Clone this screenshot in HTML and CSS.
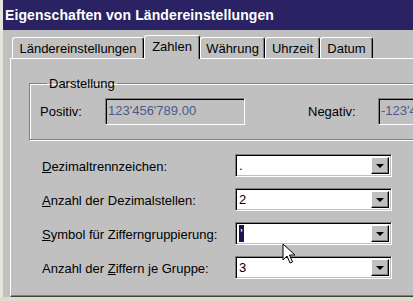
FILE: index.html
```html
<!DOCTYPE html>
<html lang="de">
<head>
    <meta charset="UTF-8">
    <title>Eigenschaften von Ländereinstellungen</title>
    <link rel="stylesheet" href="styles.css">
</head>
<body>
    <div class="window">
        <div class="titlebar">Eigenschaften von Ländereinstellungen</div>

        <div class="tabs">
            <div class="tab tab-land">Ländereinstellungen</div>
            <div class="tab tab-zahlen active">Zahlen</div>
            <div class="tab tab-waehrung">Währung</div>
            <div class="tab tab-uhrzeit">Uhrzeit</div>
            <div class="tab tab-datum">Datum</div>
        </div>

        <div class="panel">
            <fieldset class="group">
                <legend>Darstellung</legend>
                <div class="sample-row">
                    <span class="sample-label">Positiv:</span>
                    <div class="sample-box">123'456'789.00</div>
                    <span class="sample-label neg">Negativ:</span>
                    <div class="sample-box wide">-123'456'789.00</div>
                </div>
            </fieldset>

            <div class="settings">
                <div class="row">
                    <label><u>D</u>ezimaltrennzeichen:</label>
                    <div class="combo">
                        <span class="value">.</span>
                        <span class="drop"><span class="arrow"></span></span>
                    </div>
                </div>
                <div class="row">
                    <label><u>A</u>nzahl der Dezimalstellen:</label>
                    <div class="combo">
                        <span class="value">2</span>
                        <span class="drop"><span class="arrow"></span></span>
                    </div>
                </div>
                <div class="row">
                    <label><u>S</u>ymbol für Zifferngruppierung:</label>
                    <div class="combo">
                        <span class="value"><span class="selected">'</span></span>
                        <span class="drop"><span class="arrow"></span></span>
                    </div>
                </div>
                <div class="row">
                    <label>Anzahl der <u>Z</u>iffern je Gruppe:</label>
                    <div class="combo">
                        <span class="value">3</span>
                        <span class="drop"><span class="arrow"></span></span>
                    </div>
                </div>
            </div>
        </div>
    </div>

    <!-- mouse pointer over the third combo -->
    <svg class="cursor" width="14" height="22" viewBox="0 0 14 22">
        <path d="M1 1 L1 17 L5 13 L8 20 L10.5 19 L7.5 12 L13 12 Z" fill="#fff" stroke="#000" stroke-width="1" stroke-linejoin="round"/>
    </svg>
</body>
</html>
```

FILE: styles.css
```css
body {
    margin: 0;
    width: 413px;
    height: 301px;
    overflow: hidden;
    background-color: #dedbc9;
    font-family: "Liberation Sans", Arial, sans-serif;
    font-size: 13px;
    color: #000;
    position: relative;
}
.window {
    height: 297px;
    border-left: 3px solid #e6e5dc;
    background-color: #c0c0c0;
    overflow: hidden;
}
.titlebar {
    height: 30px;
    line-height: 30px;
    padding-left: 2px;
    background-color: #2a2262;
    color: #fff;
    font-weight: bold;
    font-size: 14px;
    letter-spacing: 0.1px;
    white-space: nowrap;
}

/* tab strip */
.tabs {
    display: flex;
    align-items: flex-end;
    height: 28px;
    padding-left: 9px;
}
.tab {
    flex-shrink: 0;
    display: flex;
    align-items: center;
    justify-content: center;
    border-top: 1px solid #fff;
    border-left: 1px solid #fff;
    border-right: 1px solid #000;
    border-radius: 3px 3px 0 0;
    box-shadow: inset -1px 0 0 #808080;
    box-sizing: border-box;
    height: 21px;
    padding-top: 1px;
}
.tab.active {
    height: 24px;
    margin-bottom: -1px;
    padding-bottom: 4px;
    background-color: #c0c0c0;
    position: relative;
    z-index: 1;
}
.tab-land { width: 132px; }
.tab-zahlen { width: 56px; }
.tab-waehrung { width: 65px; }
.tab-uhrzeit { width: 55px; }
.tab-datum { width: 53px; }

/* page of the active tab */
.panel {
    margin-left: 7px;
    width: 430px;
    height: 239px;
    box-sizing: border-box;
    border-top: 1px solid #fff;
    border-left: 1px solid #fff;
    border-bottom: 1px solid #404040;
    box-shadow: inset 0 -1px 0 #808080;
    overflow: hidden;
}
.group {
    margin: 17px 0 0 18px;
    padding: 0 0 14px 10px;
    border: 1px solid #808080;
    box-shadow: inset 1px 1px 0 #fff, 1px 1px 0 #fff;
    min-width: 0;
}
.group legend {
    margin-left: 7px;
    padding: 0 2px;
    line-height: 15px;
}
.sample-row {
    display: flex;
    align-items: center;
    margin-top: 7px;
}
.sample-label {
    flex-shrink: 0;
    width: 65px;
}
.sample-label.neg {
    margin-left: 63px;
    width: 70px;
}
.sample-box {
    flex-shrink: 0;
    width: 140px;
    height: 27px;
    box-sizing: border-box;
    border-top: 1px solid #808080;
    border-left: 1px solid #808080;
    border-right: 1px solid #fff;
    border-bottom: 1px solid #fff;
    box-shadow: inset 1px 1px 0 #000;
    padding: 4px 0 0 2px;
    color: #4b5a8c;
    white-space: nowrap;
    overflow: hidden;
}
.sample-box.wide {
    width: 120px;
}

/* combo rows */
.settings {
    margin: 14px 0 0 31px;
    display: flex;
    flex-direction: column;
    gap: 11px;
}
.row {
    display: flex;
    align-items: center;
}
.row label {
    flex-shrink: 0;
    width: 193px;
    padding-top: 2px;
}
.combo {
    flex-shrink: 0;
    width: 157px;
    height: 23px;
    box-sizing: border-box;
    display: flex;
    background-color: #fff;
    border-top: 1px solid #808080;
    border-left: 1px solid #808080;
    border-right: 1px solid #fff;
    border-bottom: 1px solid #fff;
    box-shadow: inset 1px 1px 0 #000, inset -1px -1px 0 #c0c0c0;
    padding: 2px;
}
.combo .value {
    flex: 1;
    padding-left: 1px;
    line-height: 18px;
    display: flex;
    align-items: stretch;
}
.combo .selected {
    background-color: #1c1650;
    color: #fff;
    width: 5px;
    text-align: center;
}
.combo .drop {
    width: 18px;
    box-sizing: border-box;
    background-color: #c0c0c0;
    border-top: 1px solid #fff;
    border-left: 1px solid #fff;
    border-right: 1px solid #000;
    border-bottom: 1px solid #000;
    box-shadow: inset -1px -1px 0 #808080;
    display: flex;
    align-items: center;
    justify-content: center;
}
.combo .arrow {
    width: 0;
    height: 0;
    border-left: 4px solid transparent;
    border-right: 4px solid transparent;
    border-top: 4px solid #000;
    margin: 1px 1px 0 0;
}

.cursor {
    position: absolute;
    left: 282px;
    top: 243px;
}
```
